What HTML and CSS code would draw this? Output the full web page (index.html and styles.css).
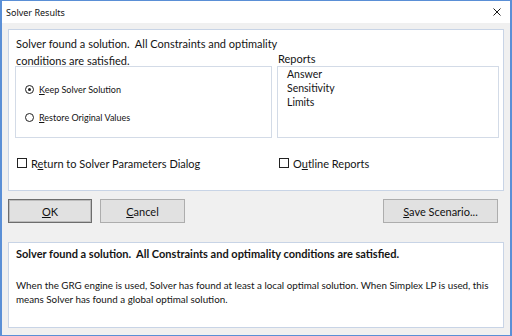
FILE: index.html
```html
<!DOCTYPE html>
<html>
<head>
<meta charset="utf-8">
<link rel="stylesheet" href="styles.css">
</head>
<body>
<div class="window">
  <div class="titlebar">
    <span class="title">Solver Results</span>
    <span class="close">
      <svg width="8" height="8" viewBox="0 0 8 8"><path d="M0.5 0.5 L7.5 7.5 M7.5 0.5 L0.5 7.5" stroke="#1a1a1a" stroke-width="1" fill="none"/></svg>
    </span>
  </div>
  <div class="body">
    <div class="panel top">
      <div class="cols">
        <div class="left">
          <div class="heading">Solver found a solution.&nbsp; All Constraints and optimality<br>conditions are satisfied.</div>
          <div class="group">
            <label class="radio"><span class="dot checked"></span><span><u>K</u>eep Solver Solution</span></label>
            <label class="radio"><span class="dot"></span><span><u>R</u>estore Original Values</span></label>
          </div>
        </div>
        <div class="right">
          <div class="rlabel">Reports</div>
          <div class="listbox">
            <div class="item">Answer</div>
            <div class="item">Sensitivity</div>
            <div class="item">Limits</div>
          </div>
        </div>
      </div>
      <div class="checks">
        <label class="check left-check"><span class="box"></span><span>R<u>e</u>turn to Solver Parameters Dialog</span></label>
        <label class="check"><span class="box"></span><span>O<u>u</u>tline Reports</span></label>
      </div>
    </div>
    <div class="buttons">
      <button class="btn default"><u>O</u>K</button>
      <button class="btn"><u>C</u>ancel</button>
      <span class="spacer"></span>
      <button class="btn wide"><u>S</u>ave Scenario...</button>
    </div>
    <div class="panel bottom">
      <div class="bold">Solver found a solution.&nbsp; All Constraints and optimality conditions are satisfied.</div>
      <div class="desc">When the GRG engine is used, Solver has found at least a local optimal solution. When Simplex LP is used, this means Solver has found a global optimal solution.</div>
    </div>
  </div>
</div>
</body>
</html>
```
FILE: styles.css
```css
* { box-sizing: border-box; }
html, body { margin: 0; padding: 0; }
body { width: 512px; height: 336px; overflow: hidden; background: #fff; }
.window {
  width: 512px; height: 336px;
  border: 1px solid #5a8fd6;
  border-left-width: 2px; border-right-width: 2px;
  display: flex; flex-direction: column;
  font-family: Lato, "Open Sans", sans-serif;
  color: #141414;
}
.titlebar {
  height: 22px; background: #fff;
  display: flex; align-items: center; justify-content: space-between;
  padding: 0 9px 0 4px;
}
.title { font-family: "Noto Sans", "Open Sans", sans-serif; font-size: 9px; color: #111; }
.close { display: flex; align-items: center; }
.body {
  flex: 1; background: #f0f0f0;
  padding: 6px 0 0 6px;
  display: flex; flex-direction: column;
}
.panel { background: #fff; border: 1px solid #c8d4e6; width: 496px; }
.top { height: 162px; padding: 5px 0 0 6px; }
.cols { display: flex; gap: 5px; }
.left { width: 257px; }
.heading { font-size: 11px; line-height: 17px; white-space: nowrap; margin-left: 1px; }
.group {
  margin-top: -3px; height: 72px; border: 1px solid #d3dbe7;
  display: flex; flex-direction: column; gap: 14px;
  padding: 15px 0 0 9px;
}
.radio { display: flex; align-items: center; gap: 5px; font-size: 9px; height: 14px; }
.dot {
  width: 9px; height: 9px; border-radius: 50%; border: 1px solid #222;
  display: flex; align-items: center; justify-content: center; background: #fff;
}
.dot.checked::after { content: ""; width: 3px; height: 3px; border-radius: 50%; background: #222; }
.right { width: 222px; padding-top: 17px; }
.rlabel { font-size: 11px; line-height: 14px; margin-left: 1px; }
.listbox {
  height: 72px; border: 1px solid #d3dbe7;
  padding: 0 0 0 9px;
}
.item { font-size: 10.5px; line-height: 14px; }
.checks { display: flex; margin-top: 18px; }
.check { display: flex; align-items: center; gap: 4px; font-size: 11px; height: 14px; }
.left-check { width: 262px; margin-left: 2px; }
.box { width: 10px; height: 10px; border: 1px solid #222; background: #fff; }
.buttons { display: flex; gap: 8px; margin-top: 8px; width: 496px; padding-right: 6px; }
.spacer { flex: 1; }
.btn {
  height: 24px; width: 85px;
  background: #e1e1e1; border: 1px solid #adadad;
  font-family: Lato, "Open Sans", sans-serif; font-size: 11px; color: #111;
  padding: 0;
}
.btn.default { width: 84px; border: 1px solid #6d6d6d; box-shadow: inset 0 0 0 1px #bcbcbc; }
.btn.wide { width: 115px; }
.bottom { margin-top: 19px; height: 86px; padding: 4px 8px 0 7px; }
.bold { font-size: 11px; font-weight: bold; line-height: 14px; }
.desc { font-size: 9.8px; line-height: 14px; margin-top: 17px; }
u { text-decoration: underline; text-underline-offset: 1px; }
```
